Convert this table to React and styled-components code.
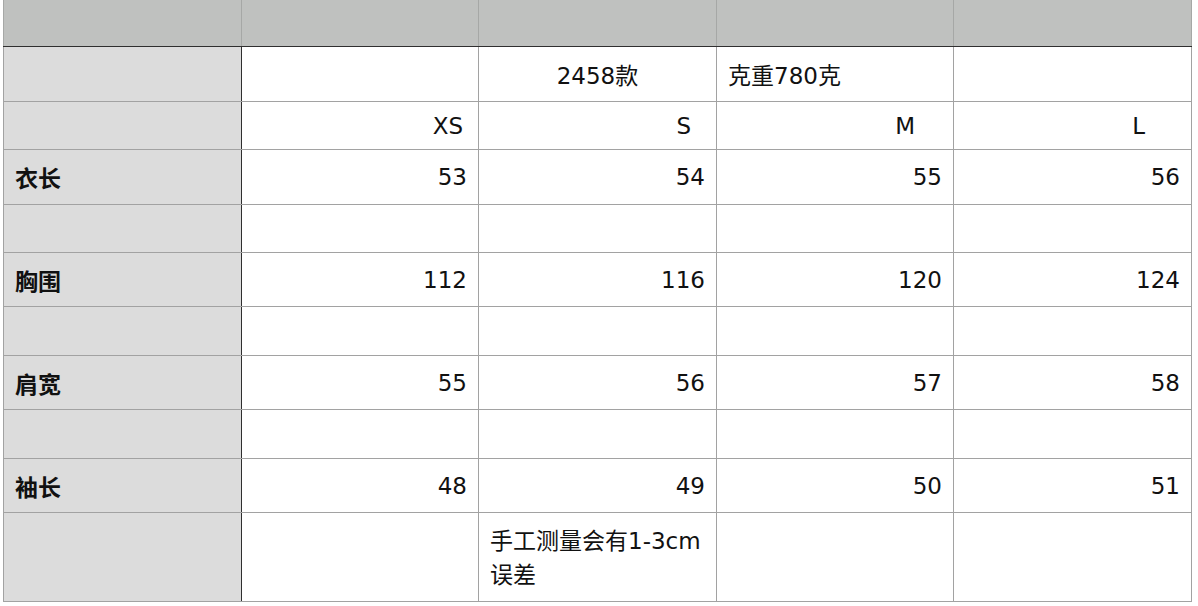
import React from 'react'
import styled, { createGlobalStyle } from 'styled-components'

const GlobalStyle = createGlobalStyle`
  html, body {
    margin: 0;
    padding: 0;
    background: #fff;
  }
  body {
    font-family: "DejaVu Sans", "Noto Sans CJK SC", sans-serif;
    color: #111;
  }
`

const Sheet = styled.table`
  margin-left: 3px;
  border-collapse: collapse;
  table-layout: fixed;
  width: 1189px;
  font-size: 23px;
`

const HeadCell = styled.th`
  height: 46px;
  padding: 0;
  background: #bfc1bf;
  border-left: 1px solid #a6a8a6;
  border-right: 1px solid #a6a8a6;
  border-bottom: 1px solid #2f2f2f;
`

const LabelCell = styled.td`
  height: ${(p) => p.h}px;
  padding: 0 0 0 11px;
  background: #dcdcdc;
  border: 1px solid #a2a2a2;
  border-right: 1px solid #2f2f2f;
  font-weight: bold;
  text-align: left;
  vertical-align: middle;
`

// top-aligned cells carry their padding inside the row height
const Cell = styled.td`
  height: ${(p) => (p.top ? p.h - 11 : p.h)}px;
  padding: ${(p) => (p.top ? '11px 11px 0' : `0 ${p.pad ?? 11}px 0 11px`)};
  border: 1px solid #a2a2a2;
  text-align: ${(p) => p.align || 'right'};
  vertical-align: ${(p) => (p.top ? 'top' : 'middle')};
  line-height: ${(p) => (p.top ? '34px' : 'normal')};
  white-space: ${(p) => (p.top ? 'normal' : 'nowrap')};
`

const sizes = [
  { t: 'XS', pad: 15 },
  { t: 'S', pad: 25 },
  { t: 'M', pad: 38 },
  { t: 'L', pad: 46 },
]

const measures = [
  { label: '衣长', vals: [53, 54, 55, 56], h: 54, gap: 47 },
  { label: '胸围', vals: [112, 116, 120, 124], h: 53, gap: 48 },
  { label: '肩宽', vals: [55, 56, 57, 58], h: 53, gap: 48 },
  { label: '袖长', vals: [48, 49, 50, 51], h: 53 },
]

const widths = [238, 237, 238, 237, 238]

export default function App() {
  return (
    <>
      <GlobalStyle />
      <Sheet>
        <colgroup>
          {widths.map((w, i) => (
            <col key={i} style={{ width: w }} />
          ))}
        </colgroup>
        <thead>
          <tr>
            {widths.map((_, i) => (
              <HeadCell key={i} />
            ))}
          </tr>
        </thead>
        <tbody>
          <tr>
            <LabelCell h={54} />
            <Cell h={54} />
            <Cell h={54} align="center">2458款</Cell>
            <Cell h={54} align="left">克重780克</Cell>
            <Cell h={54} />
          </tr>
          <tr>
            <LabelCell h={47} />
            {sizes.map((s) => (
              <Cell key={s.t} h={47} pad={s.pad}>{s.t}</Cell>
            ))}
          </tr>
          {measures.map((m) => (
            <React.Fragment key={m.label}>
              <tr>
                <LabelCell h={m.h}>{m.label}</LabelCell>
                {m.vals.map((v, j) => (
                  <Cell key={j} h={m.h}>{v}</Cell>
                ))}
              </tr>
              {m.gap && (
                <tr>
                  <LabelCell h={m.gap} />
                  {m.vals.map((_, j) => (
                    <Cell key={j} h={m.gap} />
                  ))}
                </tr>
              )}
            </React.Fragment>
          ))}
          <tr>
            <LabelCell h={88} />
            <Cell h={88} />
            <Cell h={88} top align="left">手工测量会有1-3cm误差</Cell>
            <Cell h={88} />
            <Cell h={88} />
          </tr>
        </tbody>
      </Sheet>
    </>
  )
}
